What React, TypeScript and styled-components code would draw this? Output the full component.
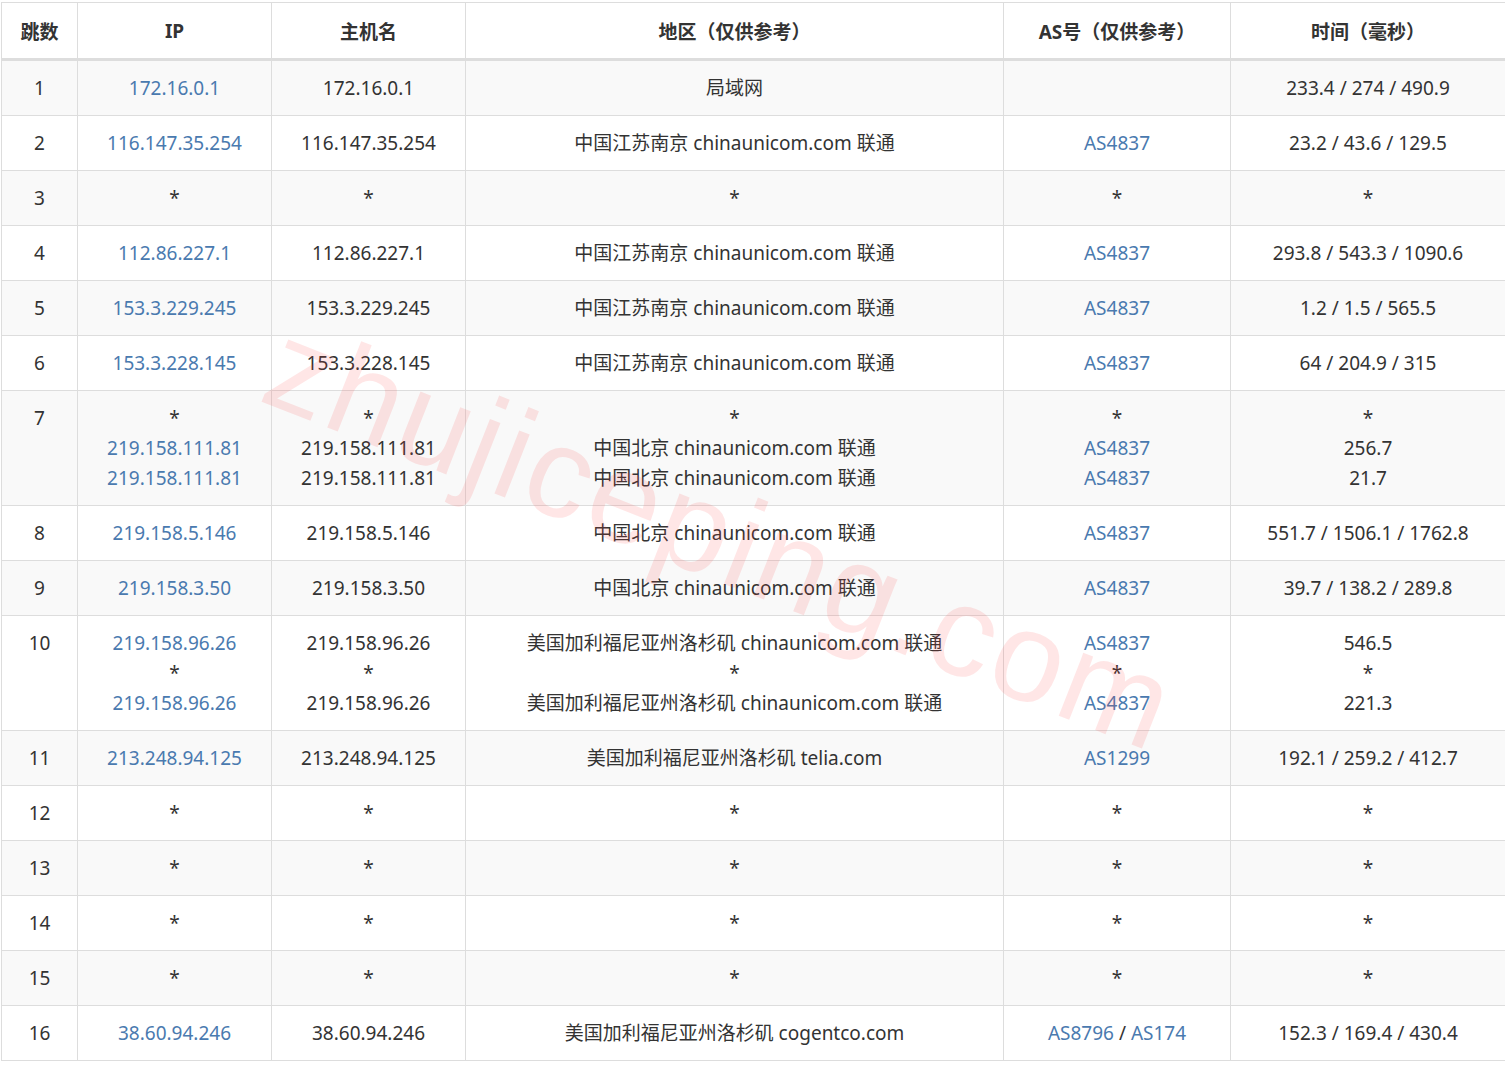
import React from "react";
import styled, { createGlobalStyle } from "styled-components";

const Global = createGlobalStyle`
  body { margin: 0; background: #fff; font-family: "Noto Sans", "Noto Sans CJK SC", sans-serif; color: #333; }
`;
const Wrap = styled.div`position: relative; padding: 2px 0 0 1px; overflow: hidden; height: 1065px; box-sizing: border-box;`;
const Table = styled.table`
  border-collapse: collapse; width: 1498px; table-layout: fixed; font-size: 19px;
`;
const Th = styled.th<{ w: number }>`
  width: ${p => p.w}px; height: 55px; font-weight: 700; font-size: 19px; color: #333;
  border: 1px solid #ddd; border-bottom: 3px solid #ddd; text-align: center; padding: 0;
`;
const Tr = styled.tr<{ odd: boolean }>`background: ${p => (p.odd ? "#f9f9f9" : "#fff")};`;
const Td = styled.td`
  border: 1px solid #ddd; text-align: center; vertical-align: top; padding: 12px 4px; line-height: 30px;
  white-space: nowrap;
`;
const Line = styled.div``;
const Link = styled.span`color: #4a7aaf;`;
const Mark = styled.div`
  position: absolute; left: 300px; top: 290px; font-size: 128px; font-family: "Liberation Sans", sans-serif;
  color: rgba(255, 60, 60, 0.13); transform: rotate(21.5deg); transform-origin: left top; pointer-events: none;
  letter-spacing: 3px; white-space: nowrap;
`;

type Row = [string, string[], string[], string[], string[], string[]];
const S = "*";
const rows: Row[] = [
  ["1", ["172.16.0.1"], ["172.16.0.1"], ["局域网"], [""], ["233.4 / 274 / 490.9"]],
  ["2", ["116.147.35.254"], ["116.147.35.254"], ["中国江苏南京 chinaunicom.com 联通"], ["AS4837"], ["23.2 / 43.6 / 129.5"]],
  ["3", [S], [S], [S], [S], [S]],
  ["4", ["112.86.227.1"], ["112.86.227.1"], ["中国江苏南京 chinaunicom.com 联通"], ["AS4837"], ["293.8 / 543.3 / 1090.6"]],
  ["5", ["153.3.229.245"], ["153.3.229.245"], ["中国江苏南京 chinaunicom.com 联通"], ["AS4837"], ["1.2 / 1.5 / 565.5"]],
  ["6", ["153.3.228.145"], ["153.3.228.145"], ["中国江苏南京 chinaunicom.com 联通"], ["AS4837"], ["64 / 204.9 / 315"]],
  ["7", [S, "219.158.111.81", "219.158.111.81"], [S, "219.158.111.81", "219.158.111.81"], [S, "中国北京 chinaunicom.com 联通", "中国北京 chinaunicom.com 联通"], [S, "AS4837", "AS4837"], [S, "256.7", "21.7"]],
  ["8", ["219.158.5.146"], ["219.158.5.146"], ["中国北京 chinaunicom.com 联通"], ["AS4837"], ["551.7 / 1506.1 / 1762.8"]],
  ["9", ["219.158.3.50"], ["219.158.3.50"], ["中国北京 chinaunicom.com 联通"], ["AS4837"], ["39.7 / 138.2 / 289.8"]],
  ["10", ["219.158.96.26", S, "219.158.96.26"], ["219.158.96.26", S, "219.158.96.26"], ["美国加利福尼亚州洛杉矶 chinaunicom.com 联通", S, "美国加利福尼亚州洛杉矶 chinaunicom.com 联通"], ["AS4837", S, "AS4837"], ["546.5", S, "221.3"]],
  ["11", ["213.248.94.125"], ["213.248.94.125"], ["美国加利福尼亚州洛杉矶 telia.com"], ["AS1299"], ["192.1 / 259.2 / 412.7"]],
  ["12", [S], [S], [S], [S], [S]],
  ["13", [S], [S], [S], [S], [S]],
  ["14", [S], [S], [S], [S], [S]],
  ["15", [S], [S], [S], [S], [S]],
  ["16", ["38.60.94.246"], ["38.60.94.246"], ["美国加利福尼亚州洛杉矶 cogentco.com"], ["AS8796 / AS174"], ["152.3 / 169.4 / 430.4"]],
];

const renderAs = (s: string) => {
  if (!s.startsWith("AS")) return s;
  const parts = s.split(" / ");
  return parts.map((p, i) => (
    <React.Fragment key={i}>{i > 0 && " / "}<Link>{p}</Link></React.Fragment>
  ));
};

export default function App() {
  return (
    <Wrap>
      <Global />
      <Table>
        <thead>
          <tr>
            <Th w={75}>跳数</Th>
            <Th w={193}>IP</Th>
            <Th w={193}>主机名</Th>
            <Th w={537}>地区（仅供参考）</Th>
            <Th w={226}>AS号（仅供参考）</Th>
            <Th w={274}>时间（毫秒）</Th>
          </tr>
        </thead>
        <tbody>
          {rows.map((r, i) => (
            <Tr key={i} odd={i % 2 === 0}>
              <Td>{r[0]}</Td>
              <Td>{r[1].map((v, j) => <Line key={j}>{v === S ? v : <Link>{v}</Link>}</Line>)}</Td>
              <Td>{r[2].map((v, j) => <Line key={j}>{v}</Line>)}</Td>
              <Td>{r[3].map((v, j) => <Line key={j}>{v}</Line>)}</Td>
              <Td>{r[4].map((v, j) => <Line key={j}>{v ? renderAs(v) : "\u00a0"}</Line>)}</Td>
              <Td>{r[5].map((v, j) => <Line key={j}>{v}</Line>)}</Td>
            </Tr>
          ))}
        </tbody>
      </Table>
      <Mark>zhujiceping.com</Mark>
    </Wrap>
  );
}
